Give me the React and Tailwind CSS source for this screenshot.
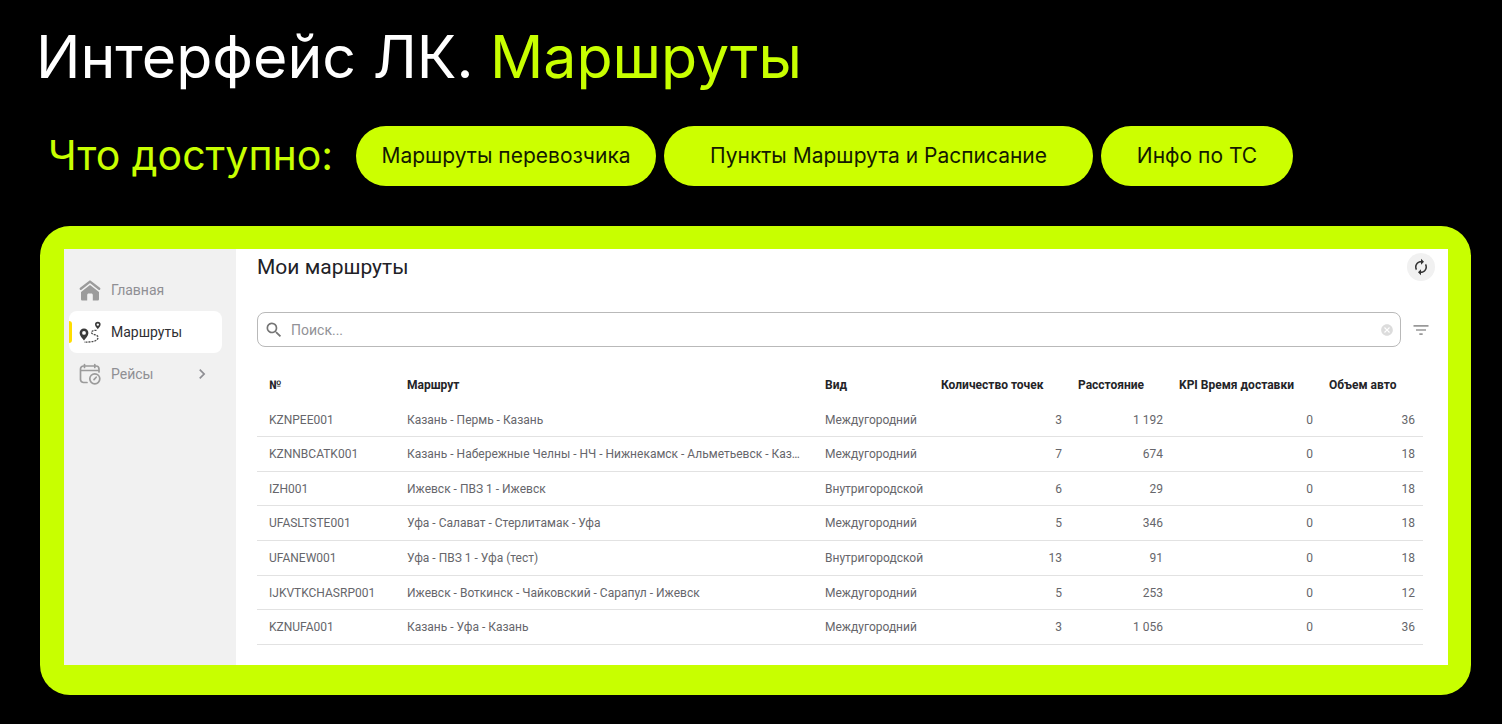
import React, { useState } from 'react';
import { MdAutorenew, MdCancel, MdFilterList, MdSearch, MdChevronRight } from 'react-icons/md';

const routes = [
  { id: 'KZNPEE001', name: 'Казань - Пермь - Казань', type: 'Междугородний', points: 3, distance: '1 192', kpi: 0, volume: 36 },
  { id: 'KZNNBCATK001', name: 'Казань - Набережные Челны - НЧ - Нижнекамск - Альметьевск - Казань', type: 'Междугородний', points: 7, distance: '674', kpi: 0, volume: 18 },
  { id: 'IZH001', name: 'Ижевск - ПВЗ 1 - Ижевск', type: 'Внутригородской', points: 6, distance: '29', kpi: 0, volume: 18 },
  { id: 'UFASLTSTE001', name: 'Уфа - Салават - Стерлитамак - Уфа', type: 'Междугородний', points: 5, distance: '346', kpi: 0, volume: 18 },
  { id: 'UFANEW001', name: 'Уфа - ПВЗ 1 - Уфа (тест)', type: 'Внутригородской', points: 13, distance: '91', kpi: 0, volume: 18 },
  { id: 'IJKVTKCHASRP001', name: 'Ижевск - Воткинск - Чайковский - Сарапул - Ижевск', type: 'Междугородний', points: 5, distance: '253', kpi: 0, volume: 12 },
  { id: 'KZNUFA001', name: 'Казань - Уфа - Казань', type: 'Междугородний', points: 3, distance: '1 056', kpi: 0, volume: 36 },
];

const HomeIcon = () => (
  <svg viewBox="0 0 22 22" className="size-[22px]" fill="none">
    <path d="M1.8 9.800 11 2.600l9.200 7.200" stroke="#9b9b9b" strokeWidth="2.4" strokeLinecap="round" strokeLinejoin="round" />
    <path d="M11 6 20 13v7c0 1-.6 1.500-1.500 1.500h-4.700V16c0-.9-.5-1.500-1.500-1.500H9.700c-1 0-1.500.6-1.500 1.500v5.500H3.500C2.600 21.500 2 21 2 20v-7z" fill="#9b9b9b" />
  </svg>
);

const RoutesIcon = () => (
  <svg viewBox="0 0 22 22" className="size-[22px]" fill="none">
    <path fillRule="evenodd" d="M5 7.500a4.400 4.400 0 0 0-4.400 4.400c0 3 2.700 4.800 4.400 7.700 1.700-2.900 4.400-4.700 4.400-7.700A4.400 4.400 0 0 0 5 7.500zm0 2.500a1.900 1.900 0 1 1 0 3.800 1.900 1.900 0 0 1 0-3.800z" fill="#3a3a3a" />
    <path fillRule="evenodd" d="M18.800.8A2.800 2.800 0 0 0 16 3.600c0 1.900 1.700 2.900 2.800 4.700 1.100-1.800 2.800-2.800 2.800-4.700A2.800 2.800 0 0 0 18.800.8zm0 1.600a1.200 1.200 0 1 1 0 2.400 1.200 1.200 0 0 1 0-2.400z" fill="#3a3a3a" />
    <path d="M17.500 9.300c-2.500 0-5 .4-5 2.200 0 2.500 6.500 1.500 6.500 4.800 0 4-6.500 4.800-14 4.800" stroke="#4a4a4a" strokeWidth="1.300" strokeDasharray="2 1" />
  </svg>
);

const TripsIcon = () => (
  <svg viewBox="0 0 22 22" className="size-[22px]" fill="none" stroke="#9b9b9b" strokeWidth="1.700" strokeLinecap="round">
    <path d="M8 19.500H4.500A3 3 0 0 1 1.500 16.500V6a3 3 0 0 1 3-3h12.500a3 3 0 0 1 3 3v3M1.500 7.500H20M5.500 1.500v3M15.800 1.500v3" />
    <circle cx="15.800" cy="15.800" r="5" />
    <path d="m15 16.600 2.200-2.400" />
  </svg>
);

const App = () => {
  const [search, setSearch] = useState('');
  const visible = routes.filter(r => (r.id + r.name).toLowerCase().includes(search.toLowerCase()));

  return (
    <div className="min-h-screen bg-black pt-[23px] pl-10 pr-[31px] pb-[29px] font-['Inter',sans-serif]">
      <h1 className="-ml-1 text-[59px] leading-[68px] text-white">
        Интерфейс ЛК. <span className="text-[#c8ff00]">Маршруты</span>
      </h1>

      <div className="mt-[35px] flex items-start pl-2">
        <h2 className="mr-6 w-[284px] text-[41px] leading-[58px] text-[#c8ff00] whitespace-nowrap">Что доступно:</h2>
        <div className="flex gap-2 text-[21px] text-[#141a00] whitespace-nowrap">
          <button className="h-[60px] w-[300px] rounded-full bg-[#ccff00]">Маршруты перевозчика</button>
          <button className="h-[60px] w-[429px] rounded-full bg-[#ccff00]">Пункты Маршрута и Расписание</button>
          <button className="h-[60px] w-[192px] rounded-full bg-[#ccff00]">Инфо по ТС</button>
        </div>
      </div>

      <div className="mt-10 rounded-[30px] bg-[#c8ff00] pt-[23px] pr-[23px] pb-[30px] pl-6 font-['Roboto',sans-serif]">
        <div className="flex bg-white">
          <aside className="w-[172px] shrink-0 bg-[#f1f1f1] pt-5 pl-[5px] pr-[14px] text-sm text-[#8f8f94]">
            <nav>
              <a href="#home" className="flex h-[42px] items-center gap-[10px] px-[10px]">
                <HomeIcon />
                Главная
              </a>
              <a href="#routes" className="relative flex h-[42px] items-center gap-[10px] rounded-lg bg-white px-[10px] text-[#2f2f33]">
                <span className="absolute left-0 top-[10px] h-[22px] w-[3px] rounded-r-sm bg-[#ffdd00]" />
                <RoutesIcon />
                Маршруты
              </a>
              <a href="#trips" className="flex h-[42px] items-center gap-[10px] px-[10px]">
                <TripsIcon />
                Рейсы
                <MdChevronRight className="ml-auto size-5" />
              </a>
            </nav>
          </aside>

          <main className="min-w-0 flex-1 pt-1 pl-[21px] pr-[25px] pb-5">
            <div className="flex h-7 items-center justify-between">
              <h3 className="text-[21px] leading-7 text-[#212126]">Мои маршруты</h3>
              <button aria-label="Обновить" className="-mr-3 flex size-7 items-center justify-center rounded-full bg-[#f1f1f1] text-[#333]">
                <MdAutorenew className="size-[18px]" />
              </button>
            </div>

            <div className="mt-[31px] flex items-center">
              <label className="flex h-[35px] flex-1 items-center rounded-lg border border-[#b9b9b9] px-[6px]">
                <MdSearch className="size-5 text-[#757575]" />
                <input
                  type="text"
                  aria-label="Поиск"
                  placeholder="Поиск..."
                  value={search}
                  onChange={(e) => setSearch(e.target.value)}
                  className="ml-[7px] min-w-0 flex-1 text-sm outline-none placeholder:text-[#929297]"
                />
                <button aria-label="Очистить" onClick={() => setSearch('')} className="text-[#dcdcdc]">
                  <MdCancel className="size-[14px]" />
                </button>
              </label>
              <button aria-label="Фильтр" className="-mr-2 ml-[10px] text-[#999]">
                <MdFilterList className="size-5" />
              </button>
            </div>

            <table className="mt-5 h-[278px] w-full table-fixed text-xs text-[#66666b]">
              <thead className="text-left whitespace-nowrap text-[#242428]">
                <tr className="h-9">
                  <th className="w-[142px] pl-3 font-bold">№</th>
                  <th className="px-2 font-bold">Маршрут</th>
                  <th className="w-[116px] px-2 font-bold">Вид</th>
                  <th className="w-[137px] px-2 font-bold">Количество точек</th>
                  <th className="w-[101px] px-2 font-bold">Расстояние</th>
                  <th className="w-[150px] px-2 font-bold">KPI Время доставки</th>
                  <th className="w-[102px] px-2 font-bold">Объем авто</th>
                </tr>
              </thead>
              <tbody>
                {visible.map(r => (
                  <tr key={r.id} className="border-b border-[#e2e2e2]">
                    <td className="pl-3">{r.id}</td>
                    <td className="truncate pl-2 pr-3">{r.name}</td>
                    <td className="px-2">{r.type}</td>
                    <td className="px-2 text-right">{r.points}</td>
                    <td className="px-2 text-right">{r.distance}</td>
                    <td className="px-2 text-right">{r.kpi}</td>
                    <td className="px-2 text-right">{r.volume}</td>
                  </tr>
                ))}
              </tbody>
            </table>
          </main>
        </div>
      </div>
    </div>
  );
};

export default App;
